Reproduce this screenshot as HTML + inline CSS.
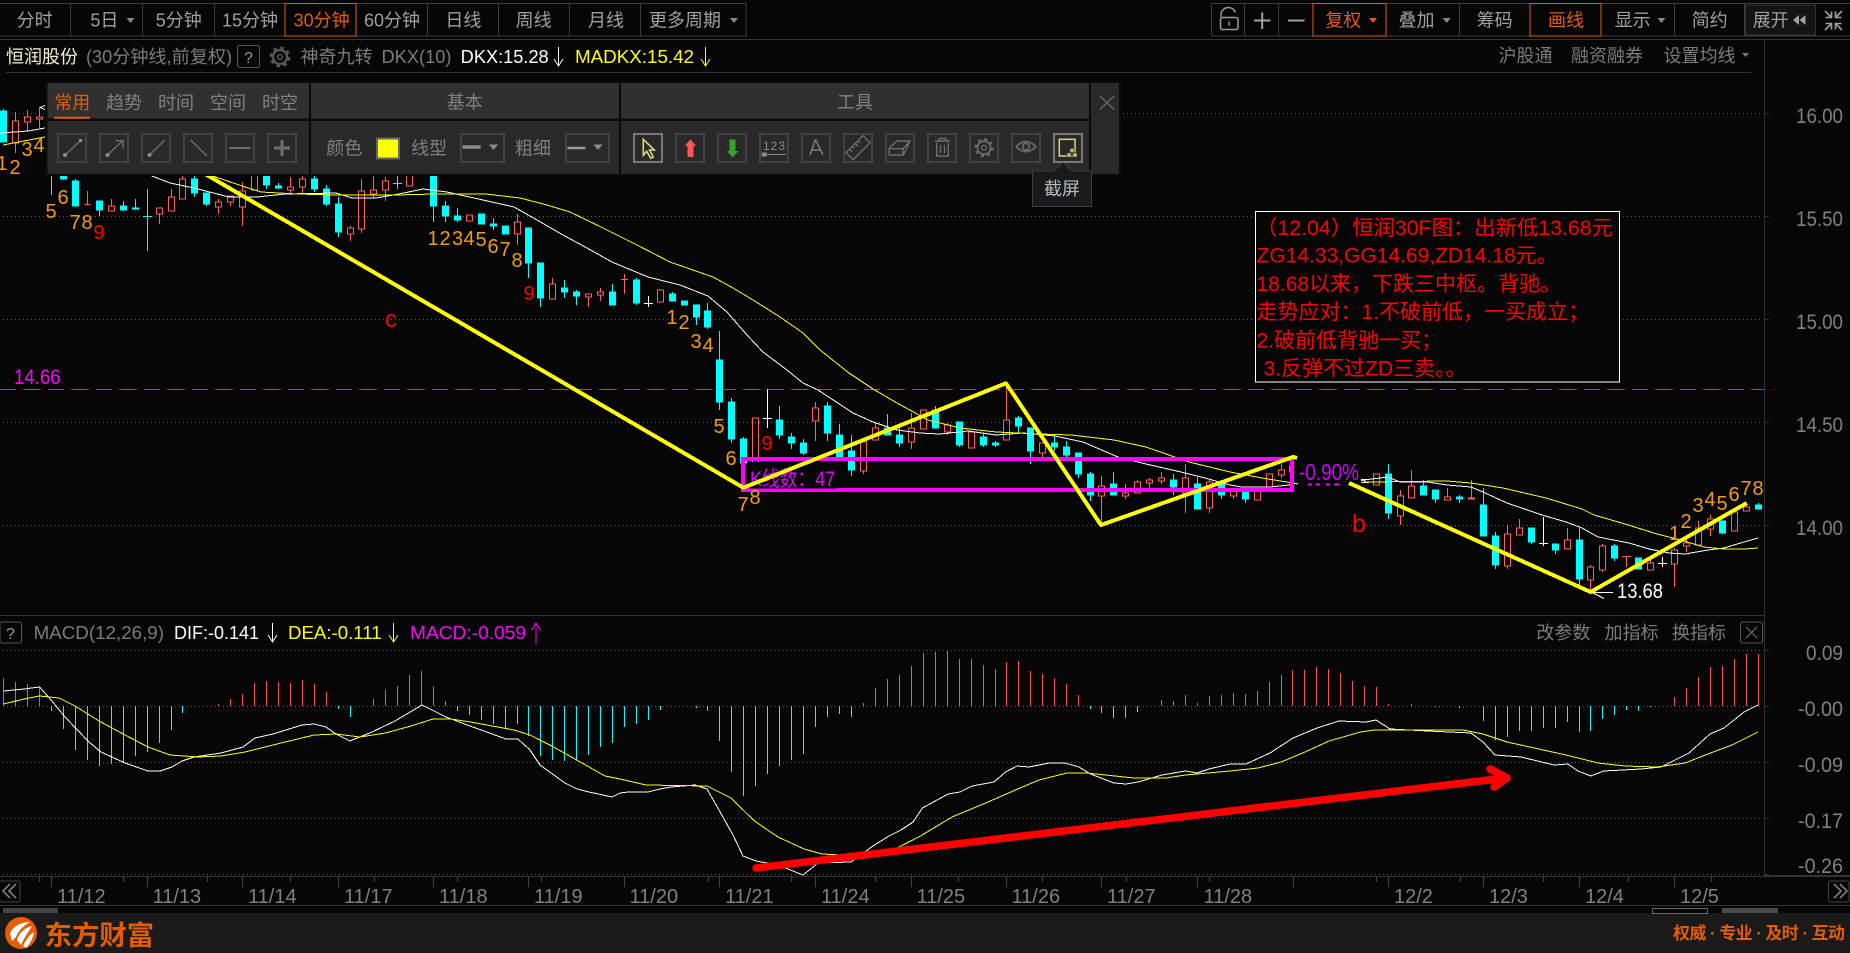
<!DOCTYPE html>
<html lang="zh-CN"><head><meta charset="utf-8"><title>恒润股份</title>
<style>
html,body{margin:0;padding:0;background:#060606;width:1850px;height:953px;overflow:hidden}
svg{display:block}
text{font-family:"Liberation Sans","Noto Sans CJK SC",sans-serif}
.t{font-size:18px;fill:#a0a0a0;text-anchor:middle}
.o{font-size:18px;fill:#e65c00;text-anchor:middle}
.s{font-size:18px;fill:#7c7c7c}
.p{font-size:18px;fill:#808080;text-anchor:middle}
.ax{font-size:21px;fill:#808080;text-anchor:end}
.d{font-size:20px;fill:#808080}
.n{font-size:20px;fill:#f39c12;text-anchor:middle}
.r{font-size:20px;fill:#f00;text-anchor:middle}
.note{font-size:21px;fill:#f00}
</style></head><body>
<svg width="1850" height="953" viewBox="0 0 1850 953" xmlns="http://www.w3.org/2000/svg">
<rect width="1850" height="953" fill="#060606"/>

<!-- grid -->
<g stroke="#5c5c5c" stroke-width="1" stroke-dasharray="1 3" shape-rendering="crispEdges">
<path d="M3 113.5H1762M3 216.5H1762M3 319.5H1762M3 422.5H1762M3 525.5H1762M3 650.5H1762M3 706.5H1762M3 762.5H1762M3 818.5H1762M3 874.5H1762"/>
</g>
<path d="M0 389.5H1764" stroke="#e010e0" stroke-width="1" stroke-dasharray="16 8" shape-rendering="crispEdges"/>
<g stroke="#333" stroke-width="1" fill="none" shape-rendering="crispEdges">
<path d="M0 39.5H1850M6 72.5H1751M0 615.5H1764M1764.5 39V875M0 876.5H1850M0 905.5H1850"/>
<path d="M1764 113.5h5M1764 216.5h5M1764 319.5h5M1764 422.5h5M1764 525.5h5M1764 650.5h5M1764 706.5h5M1764 762.5h5M1764 818.5h5M1764 874.5h5"/>
<path stroke="#444" d="M51.5 877v10M147.5 877v10M242.5 877v10M338.5 877v10M433.5 877v10M528.5 877v10M624.5 877v10M719.5 877v10M815.5 877v10M911.5 877v10M1006.5 877v10M1101.5 877v10M1197.5 877v10M1293.5 877v10M1388.5 877v10M1483.5 877v10M1579.5 877v10M1674.5 877v10"/>
<path stroke="#444" d="M39.5 877v5M123.5 877v5M207.5 877v5M290.5 877v5M374.5 877v5M457.5 877v5M541.5 877v5M708.5 877v5M791.5 877v5M875.5 877v5M958.5 877v5M1042.5 877v5M1126.5 877v5M1209.5 877v5M1376.5 877v5M1460.5 877v5M1543.5 877v5M1628.5 877v5M1711.5 877v5"/>
</g>

<!-- candles: cyan -->
<path shape-rendering="crispEdges" stroke="#0ff" fill="#0ff" stroke-width="1" d="M3.5 109V142M.5 111h6V142h-6zM51.5 174V195M63.5 174V180M60.5 174h6V179h-6zM75.5 179V206M72.5 181h6V206h-6zM99.5 201V216M96.5 201h6V210h-6zM123.5 201V211M120.5 206h6V210h-6zM135.5 199V210M132.5 208h6V209h-6zM147.5 189V251M143 216.5h9M194.5 176V197M191.5 179h6V193h-6zM206.5 193V206M203.5 193h6V204h-6zM266.5 174V189M263.5 174h6V185h-6zM278.5 183V189M275.5 186h6V188h-6zM314.5 174V192M311.5 179h6V189h-6zM326.5 185V206M323.5 189h6V204h-6zM338.5 197V237M335.5 204h6V232h-6zM397.5 176V189M393 183.5h9M433.5 174V222M430.5 174h6V206h-6zM445.5 201V222M442.5 206h6V216h-6zM457.5 208V222M454.5 216h6V220h-6zM478.5 214h6V224h-6zM493.5 218V230M490.5 224h6V226h-6zM502.5 226h6V234h-6zM528.5 228V278M525.5 228h6V263h-6zM540.5 263V307M537.5 263h6V298h-6zM564.5 280V298M561.5 288h6V292h-6zM576.5 290V305M573.5 292h6V296h-6zM612.5 284V305M609.5 292h6V305h-6zM636.5 278V305M633.5 280h6V303h-6zM672.5 292V301M669.5 294h6V301h-6zM681.5 301h6V305h-6zM696.5 305V325M693.5 305h6V317h-6zM707.5 303V329M704.5 311h6V327h-6zM719.5 331V410M716.5 360h6V402h-6zM731.5 398V443M728.5 402h6V439h-6zM743.5 437V463M740.5 439h6V463h-6zM779.5 406V439M776.5 420h6V435h-6zM791.5 433V449M788.5 437h6V443h-6zM803.5 439V455M800.5 443h6V453h-6zM827.5 402V441M824.5 406h6V433h-6zM839.5 424V460M836.5 435h6V458h-6zM851.5 435V476M848.5 451h6V470h-6zM887.5 414V435M884.5 428h6V435h-6zM899.5 425V447M896.5 435h6V443h-6zM935.5 406V428M932.5 410h6V428h-6zM959.5 422V447M956.5 422h6V445h-6zM983.5 434V447M980.5 437h6V445h-6zM995.5 441V447M992.5 443h6V445h-6zM1018.5 416V433M1015.5 418h6V426h-6zM1030.5 428V464M1027.5 428h6V451h-6zM1054.5 435V451M1051.5 443h6V447h-6zM1066.5 441V457M1063.5 447h6V455h-6zM1078.5 453V478M1075.5 453h6V474h-6zM1090.5 472V501M1087.5 474h6V495h-6zM1113.5 472V495M1110.5 484h6V495h-6zM1173.5 474V495M1170.5 480h6V487h-6zM1197.5 477V509M1194.5 484h6V509h-6zM1221.5 480V499M1218.5 484h6V495h-6zM1245.5 492V503M1242.5 492h6V499h-6zM1388.5 464V519M1385.5 474h6V513h-6zM1423.5 480V495M1420.5 486h6V495h-6zM1435.5 490V503M1432.5 490h6V499h-6zM1459.5 495V503M1456.5 497h6V499h-6zM1483.5 488V536M1480.5 505h6V536h-6zM1495.5 532V569M1492.5 536h6V565h-6zM1531.5 528V544M1528.5 528h6V542h-6zM1555.5 544V554M1552.5 544h6V550h-6zM1579.5 528V585M1576.5 540h6V579h-6zM1614.5 544V561M1611.5 546h6V558h-6zM1635.5 558h6V569h-6zM1722.5 521V534M1719.5 521h6V533h-6zM1758.5 503V509M1755.5 505h6V509h-6z"/>
<!-- candles: red hollow -->
<path shape-rendering="crispEdges" stroke="#ff5f5f" fill="none" stroke-width="1" d="M15.5 112V121M15.5 143V153M12.5 121h6V143h-6zM27.5 110V117M27.5 122V131M24.5 117h6V122h-6zM39.5 107V117M39.5 119V128M36.5 117h6V119h-6zM87.5 191V205M84.5 204.5h6M111.5 199V206M108.5 206h6V211h-6zM159.5 214V224M156.5 208h6V214h-6zM171.5 189V197M168.5 197h6V211h-6zM182.5 176V179M179.5 179h6V199h-6zM218.5 199V202M218.5 207V214M215.5 202h6V207h-6zM230.5 202V206M227.5 196h6V202h-6zM242.5 182V191M242.5 207V226M239.5 191h6V207h-6zM251.5 174V190H257.5V174M290.5 177V187M290.5 190V193M287.5 187h6V190h-6zM302.5 174V179M302.5 187V193M299.5 179h6V187h-6zM350.5 226V228M350.5 234V241M347.5 228h6V234h-6zM361.5 179V191M361.5 229V233M358.5 191h6V229h-6zM373.5 174V190M373.5 194V198M370.5 190h6V194h-6zM385.5 177V181M385.5 190V201M382.5 181h6V190h-6zM406.5 174V186H412.5V174M466.5 215h6V221h-6zM517.5 214V222M517.5 234V245M514.5 222h6V234h-6zM552.5 278V284M549.5 284h6V299h-6zM588.5 297V307M585.5 294h6V297h-6zM600.5 288V292M600.5 295V301M597.5 292h6V295h-6zM624.5 274V294M621 279.5h7M657.5 290h6V302h-6zM752.5 418h6V465h-6zM815.5 402V408M815.5 421V441M812.5 408h6V421h-6zM863.5 471V474M860.5 442h6V471h-6zM875.5 423V428M872.5 428h6V440h-6zM911.5 413V428M911.5 442V449M908.5 428h6V442h-6zM920.5 410h6V429h-6zM947.5 423V425M947.5 432V435M944.5 425h6V432h-6zM968.5 432h6V448h-6zM1006.5 386V420M1003.5 420h6V440h-6zM1042.5 453V457M1039.5 443h6V453h-6zM1101.5 476V486M1101.5 496V525M1098.5 486h6V496h-6zM1125.5 484V493M1125.5 496V499M1122.5 493h6V496h-6zM1137.5 480V482M1134.5 482h6V493h-6zM1149.5 478V480M1149.5 483V488M1146.5 480h6V483h-6zM1161.5 472V478M1161.5 481V484M1158.5 478h6V481h-6zM1185.5 464V478M1185.5 493V513M1182.5 478h6V493h-6zM1209.5 480V482M1209.5 508V513M1206.5 482h6V508h-6zM1233.5 496V499M1230.5 490h6V496h-6zM1254.5 490h6V500h-6zM1266.5 474h6V487h-6zM1281.5 464V470M1281.5 475V478M1278.5 470h6V475h-6zM1289.5 466h6V472h-6zM1373.5 474h6V485h-6zM1400.5 490V496M1400.5 516V525M1397.5 496h6V516h-6zM1411.5 470V486M1408.5 486h6V498h-6zM1447.5 488V497M1444.5 497h6V500h-6zM1471.5 480V498M1468.5 498h6V499h-6zM1507.5 525V534M1507.5 566V569M1504.5 534h6V566h-6zM1519.5 519V528M1516.5 528h6V535h-6zM1567.5 528V540M1564.5 540h6V549h-6zM1590.5 565V567M1590.5 580V590M1587.5 567h6V580h-6zM1602.5 544V546M1602.5 570V572M1599.5 546h6V570h-6zM1626.5 557V567M1622 556.5h9M1650.5 559V563M1647.5 563h6V570h-6zM1674.5 548V550M1674.5 564V587M1671.5 550h6V564h-6zM1686.5 538V543M1686.5 546V552M1683.5 543h6V546h-6zM1698.5 521V528M1695.5 528h6V545h-6zM1710.5 515V519M1710.5 529V536M1707.5 519h6V529h-6zM1731.5 512h6V531h-6zM1746.5 503V507M1743.5 507h6V511h-6z"/>
<!-- white doji -->
<path shape-rendering="crispEdges" stroke="#fff" fill="none" d="M648.5 296V307M644 303.5h9M767.5 389V428M763 418.5h9M1360 479.5h9M1360 482.5h9M1364.5 479V483M1543.5 517V546M1539 543.5h9M1662.5 557V567M1658 563.5h9M40 107.5l5-2M40 107.5l5 2"/>

<!-- moving averages -->
<polyline shape-rendering="crispEdges" fill="none" stroke="#fff" points="0,133 28,131 45,128 152,176 170,183 194,188 229,197 257,197 285,194 336,193 352,198 376,198 399,194 423,189 447,192 474,198 514,207 537,220 563,235 587,248 612,262 648,277 680,285 708,296 727,312 747,335 763,352 787,370 803,383 818,390 853,413 873,422 897,430 920,433 940,434 968,431 996,435 1023,433 1055,436 1083,442 1118,457 1146,464 1181,472 1205,478 1230,485 1242,487 1270,487 1289,485 1298,482"/>
<polyline shape-rendering="crispEdges" fill="none" stroke="#fff" points="1360,481 1364,480 1388,477 1400,482 1428,482 1447,485 1471,487 1483,492 1507,503 1542,515 1566,522 1582,528 1598,537 1629,543 1649,549 1669,553 1685,554 1708,550 1724,548 1744,542 1758,538"/>
<polyline shape-rendering="crispEdges" fill="none" stroke="#ff0" points="3,145 45,137 213,176 245,187 261,192 297,194 336,195 395,195 435,194 486,194 520,198 547,205 570,212 603,228 637,245 670,262 713,277 733,288 753,300 780,317 803,333 820,350 849,373 873,389 897,403 928,420 960,428 996,432 1039,434 1071,435 1114,440 1146,447 1189,462 1230,472 1262,478 1293,483 1298,484"/>
<polyline shape-rendering="crispEdges" fill="none" stroke="#ff0" points="1350,483 1368,482 1447,481 1471,483 1503,488 1546,498 1582,509 1594,515 1625,524 1657,534 1677,539 1704,547 1724,549 1744,549 1758,548"/>

<!-- magenta box -->
<rect x="743" y="459" width="549" height="31" fill="none" stroke="#f0f" stroke-width="4" shape-rendering="crispEdges"/>
<rect x="749" y="462" width="88" height="26.5" fill="#060606"/>
<text x="750" y="486" font-size="21" fill="#e000ff" textLength="85" lengthAdjust="spacingAndGlyphs">K线数：47</text>
<rect x="1295" y="461" width="66" height="22" fill="#060606"/>
<text x="1299" y="480" font-size="23" fill="#d000ff" textLength="60" lengthAdjust="spacingAndGlyphs">-0.90%</text>
<path d="M1308 484.5h4M1316 484.5h4M1326 484.5h4M1334 484.5h5" stroke="#f0f" stroke-width="2"/>

<!-- TD numbers -->
<g>
<text class="n" x="2" y="170">1</text><text class="n" x="15" y="174">2</text><text class="n" x="27" y="156">3</text><text class="n" x="39" y="152">4</text>
<text class="n" x="51" y="218">5</text><text class="n" x="63" y="204">6</text><text class="n" x="75" y="229">7</text><text class="n" x="87" y="229">8</text><text class="r" x="99" y="239">9</text>
<text class="n" x="433" y="245">1</text><text class="n" x="445" y="245">2</text><text class="n" x="457.5" y="245">3</text><text class="n" x="469" y="245">4</text><text class="n" x="481" y="246">5</text><text class="n" x="493" y="253">6</text><text class="n" x="505" y="256">7</text><text class="n" x="517" y="267">8</text><text class="r" x="529" y="300">9</text>
<text class="n" x="672" y="324">1</text><text class="n" x="684" y="329">2</text><text class="n" x="696" y="348">3</text><text class="n" x="708" y="352">4</text><text class="n" x="719" y="433">5</text><text class="n" x="731" y="465">6</text><text class="r" x="767" y="450">9</text>
<text class="n" x="743" y="511">7</text><text class="n" x="755" y="504">8</text>
<text class="n" x="1674.5" y="540">1</text><text class="n" x="1686" y="528">2</text><text class="n" x="1698" y="512">3</text><text class="n" x="1710" y="506">4</text><text class="n" x="1722" y="510">5</text><text class="n" x="1734" y="501">6</text><text class="n" x="1746" y="495">7</text><text class="n" x="1758" y="495">8</text>
</g>
<text x="385" y="327" font-size="24" fill="#f00">c</text>
<text x="1352" y="532" font-size="25" fill="#f00">b</text>
<text x="14" y="384" font-size="21" fill="#f0f" textLength="46.5" lengthAdjust="spacingAndGlyphs">14.66</text>
<text x="1617" y="598" font-size="21" fill="#fff" textLength="46" lengthAdjust="spacingAndGlyphs">13.68</text>
<path d="M1592 592.5H1613M1592 592.5l12 6" stroke="#fff" fill="none"/>

<!-- drawn lines -->
<g fill="none" stroke="#ff0" stroke-width="4" shape-rendering="crispEdges" stroke-linejoin="round">
<polyline points="200,171 743.4,487.7 1006,383.3 1101,525 1293,457 1297,458"/>
<polyline points="1349,483 1590.6,592 1746.8,503"/>
</g>

<!-- note box -->
<rect x="1255.5" y="211.5" width="364" height="170.5" fill="#060606" stroke="#fff" stroke-width="1" shape-rendering="crispEdges"/>
<text class="note" x="1256" y="235" textLength="357" lengthAdjust="spacingAndGlyphs">（12.04）恒润30F图：出新低13.68元</text>
<text class="note" x="1256.5" y="262.5">ZG14.33,GG14.69,ZD14.18元。</text>
<text class="note" x="1256.5" y="291">18.68以来，下跌三中枢。背驰。</text>
<text class="note" x="1256.5" y="319">走势应对：1.不破前低，一买成立；</text>
<text class="note" x="1256.5" y="347.5">2.破前低背驰一买；</text>
<text class="note" x="1263.5" y="375.5">3.反弹不过ZD三卖。。</text>

<!-- MACD bars -->
<path shape-rendering="crispEdges" stroke="#ff5050" d="M3.5 706V678M15.5 706V682M27.5 706V684M39.5 706V687M218.5 706V704M230.5 706V699M242.5 706V694M254.5 706V683M266.5 706V681M278.5 706V682M290.5 706V683M302.5 706V680M314.5 706V684M326.5 706V692M373.5 706V699M385.5 706V690M397.5 706V686M409.5 706V675M421.5 706V671M433.5 706V686M445.5 706V701M863.5 706V703M875.5 706V688M887.5 706V679M899.5 706V675M911.5 706V666M923.5 706V653M935.5 706V652M947.5 706V651M959.5 706V659M971.5 706V659M983.5 706V665M995.5 706V669M1006.5 706V662M1018.5 706V661M1030.5 706V671M1042.5 706V674M1054.5 706V678M1066.5 706V684M1078.5 706V695M1161.5 706V700M1173.5 706V701M1185.5 706V695M1197.5 706V703M1209.5 706V696M1221.5 706V695M1233.5 706V693M1245.5 706V694M1257.5 706V691M1269.5 706V682M1281.5 706V675M1292.5 706V670M1304.5 706V670M1316.5 706V667M1328.5 706V669M1340.5 706V673M1352.5 706V681M1364.5 706V686M1376.5 706V687M1388.5 706V704M1411.5 706V704M1674.5 706V697M1686.5 706V688M1698.5 706V677M1710.5 706V667M1722.5 706V666M1734.5 706V659M1746.5 706V654M1758.5 706V654"/>
<path shape-rendering="crispEdges" stroke="#0ff" d="M51.5 706V711M63.5 706V729M75.5 706V750M87.5 706V760M99.5 706V766M111.5 706V764M123.5 706V763M135.5 706V756M147.5 706V752M159.5 706V743M171.5 706V730M182.5 706V713M338.5 706V709M350.5 706V717M457.5 706V711M469.5 706V715M481.5 706V720M493.5 706V724M505.5 706V728M517.5 706V724M528.5 706V736M540.5 706V756M552.5 706V760M564.5 706V761M576.5 706V760M588.5 706V755M600.5 706V747M612.5 706V743M624.5 706V727M636.5 706V724M648.5 706V720M660.5 706V710M696.5 706V708M707.5 706V711M719.5 706V741M731.5 706V772M743.5 706V796M755.5 706V786M767.5 706V774M779.5 706V766M791.5 706V760M803.5 706V754M815.5 706V727M827.5 706V717M839.5 706V714M851.5 706V717M1090.5 706V709M1101.5 706V713M1113.5 706V718M1125.5 706V718M1137.5 706V712M1435.5 706V707M1459.5 706V708M1483.5 706V721M1495.5 706V740M1507.5 706V737M1519.5 706V731M1531.5 706V731M1543.5 706V728M1555.5 706V728M1567.5 706V722M1579.5 706V732M1590.5 706V731M1602.5 706V719M1614.5 706V715M1626.5 706V710M1638.5 706V711M1650.5 706V707"/>
<!-- MACD lines -->
<polyline shape-rendering="crispEdges" fill="none" stroke="#fff" points="3.5,691 24,689 39.5,687 51,700 65,717 89,742 101,752 125,763 148,771 160,771 172,767 182,761 194,757 221,753 243,747 255,738 273,734 302,725 314,724 326,727 336,734 350,741 372,732 395,721 422,705 446,717 470,726 506,739 518,739 530,750 540,765 565,783 577,789 589,792 612,797 620,793 628,792 648,792 660,789 671,787 695,785 707,789 719,810 733,835 743,856 756,861 778,865 803,875 818,863 851,862 873,846 889,836 901,830 913,822 922.5,808 948,794 960,792 972,786 994,782 1005.5,772 1017,766 1029,767 1049,763 1065,763 1079,767 1090.5,774 1114,783 1126,784 1138,782 1162,775 1185.5,771 1197,773 1209,769 1230,764 1246,764 1270,753 1293,738 1317,728 1339,721 1366,722 1376,720 1390,729 1428,731 1471,733 1483,742 1495,755 1521,757 1554,765 1568,764 1578,771 1590.6,776 1604,771 1641,769 1661,767 1689,753 1710,734 1724,728 1744,712 1758,705"/>
<polyline shape-rendering="crispEdges" fill="none" stroke="#ff0" points="3.5,704 24,699 39.5,696 59,698 75,706 99,721 125,735 148,747 170,755 198,757 221,756 245,752 277,744 314,735 336,734 360,737 385.5,733 411,726 433,719 451,719 470.5,722 514,730 530,735 553.6,747 589,767 605,776 620,779 646,785 707,786 731,798 754.4,821 778,837 804,849 822,854 841.5,855 897,848 920.5,836 952,817 988,802 1015.4,790 1039,780 1067,773 1086.6,773 1134,778 1165.7,778 1185.5,775 1230,771 1258,768 1281,762 1305,752 1329,741 1360.5,732 1374,730 1463,730 1483,734 1507,742 1566,755 1598,763 1625,766 1657,767 1685,763 1708,754 1732,745 1758,732"/>
<!-- red arrow -->
<path d="M756 868L1505 778M1490 769L1507 778L1494 787" fill="none" stroke="#f00" stroke-width="7.5" stroke-linecap="round" stroke-linejoin="round"/>

<!-- axis labels -->
<rect x="1770" y="40" width="80" height="575" fill="#060606"/>
<text class="ax" x="1843" y="123" textLength="47" lengthAdjust="spacingAndGlyphs">16.00</text>
<text class="ax" x="1843" y="226" textLength="47" lengthAdjust="spacingAndGlyphs">15.50</text>
<text class="ax" x="1843" y="329" textLength="47" lengthAdjust="spacingAndGlyphs">15.00</text>
<text class="ax" x="1843" y="432" textLength="47" lengthAdjust="spacingAndGlyphs">14.50</text>
<text class="ax" x="1843" y="535" textLength="47" lengthAdjust="spacingAndGlyphs">14.00</text>
<text class="ax" x="1843" y="660" font-size="20" textLength="37" lengthAdjust="spacingAndGlyphs">0.09</text>
<text class="ax" x="1843" y="716" textLength="45" lengthAdjust="spacingAndGlyphs">-0.00</text>
<text class="ax" x="1843" y="772" textLength="45" lengthAdjust="spacingAndGlyphs">-0.09</text>
<text class="ax" x="1843" y="828" textLength="45" lengthAdjust="spacingAndGlyphs">-0.17</text>
<text class="ax" x="1843" y="873" textLength="45" lengthAdjust="spacingAndGlyphs">-0.26</text>
<path d="M1764 875.5H1850" stroke="#333" shape-rendering="crispEdges"/>

<!-- dates -->
<text class="d" x="57" y="903">11/12</text><text class="d" x="152.6" y="903">11/13</text><text class="d" x="248" y="903">11/14</text><text class="d" x="344" y="903">11/17</text><text class="d" x="439" y="903">11/18</text><text class="d" x="534" y="903">11/19</text><text class="d" x="629.5" y="903">11/20</text><text class="d" x="725" y="903">11/21</text><text class="d" x="821" y="903">11/24</text><text class="d" x="916.6" y="903">11/25</text><text class="d" x="1011.5" y="903">11/26</text><text class="d" x="1107" y="903">11/27</text><text class="d" x="1203.6" y="903">11/28</text><text class="d" x="1394" y="903">12/2</text><text class="d" x="1489" y="903">12/3</text><text class="d" x="1585" y="903">12/4</text><text class="d" x="1680" y="903">12/5</text>

<!-- nav -->
<rect x="-1" y="881" width="21" height="21" rx="2" fill="none" stroke="#444"/>
<path d="M10 884l-7 7 7 7M16 884l-7 7 7 7" fill="none" stroke="#888" stroke-width="1.5"/>
<rect x="1828.5" y="881" width="20.5" height="21" rx="2" fill="none" stroke="#444"/>
<path d="M1834 884l7 7-7 7M1840 884l7 7-7 7" fill="none" stroke="#888" stroke-width="1.5"/>

<!-- top toolbar left -->
<g fill="none" stroke="#3c3c3c" stroke-width="1" shape-rendering="crispEdges">
<path d="M0 3.5H746V36H0M70.5 3.5V36M142.5 3.5V36M214.5 3.5V36M427.5 3.5V36M498.5 3.5V36M569.5 3.5V36M640.5 3.5V36M746 3.5V36"/>
<path d="M1211.5 3.5H1850M1211.5 36H1850M1211.5 3.5V36M1244.5 3.5V36M1278.5 3.5V36M1459.5 3.5V36M1674.5 3.5V36M1744.5 3.5V36"/>
</g>
<rect x="1745.5" y="5" width="70" height="30" fill="#141414" stroke="#333"/>
<rect x="285" y="3.5" width="71" height="32.5" fill="#060606" stroke="#e65c00" shape-rendering="crispEdges"/>
<rect x="1313" y="3.5" width="73" height="32.5" fill="#060606" stroke="#e65c00" shape-rendering="crispEdges"/>
<rect x="1530" y="3.5" width="71" height="32.5" fill="#060606" stroke="#e65c00" shape-rendering="crispEdges"/>
<text class="t" x="34.6" y="26.5">分时</text><text class="t" x="104.4" y="26.5">5日</text>
<path d="M126.5 18h8l-4 5z" fill="#8a8a8a"/>
<text class="t" x="178.8" y="26.5">5分钟</text><text class="t" x="250" y="26.5">15分钟</text><text class="o" x="321.6" y="26.5">30分钟</text><text class="t" x="392" y="26.5">60分钟</text><text class="t" x="463.4" y="26.5">日线</text><text class="t" x="533.6" y="26.5">周线</text><text class="t" x="606" y="26.5">月线</text><text class="t" x="685" y="26.5">更多周期</text>
<path d="M730 18h8l-4 5z" fill="#8a8a8a"/>

<!-- top toolbar right -->
<path d="M1221 17V14a7.5 7.5 0 0 1 14.5-1.5" fill="none" stroke="#999" stroke-width="1.5"/>
<rect x="1220.5" y="17.5" width="17.5" height="12" rx="2" fill="none" stroke="#999" stroke-width="1.5"/>
<path d="M1229.2 21.5v4" stroke="#999" stroke-width="1.5"/>
<path d="M1254 20.5h16.5M1262.2 12.5v16.5M1288 20.5h16.5" stroke="#a0a0a0" stroke-width="2"/>
<text class="o" x="1343.3" y="26.5">复权</text><path d="M1369 18h8l-4 5z" fill="#e65c00"/>
<text class="t" x="1416.5" y="26.5">叠加</text><path d="M1442.7 18h8l-4 5z" fill="#8a8a8a"/>
<text class="t" x="1494.7" y="26.5">筹码</text>
<text class="o" x="1566" y="26.5">画线</text>
<text class="t" x="1632.6" y="26.5">显示</text><path d="M1657.4 18h8l-4 5z" fill="#8a8a8a"/>
<text class="t" x="1709.7" y="26.5">简约</text>
<text class="t" x="1770.7" y="26.5">展开</text>
<path d="M1799 15v10l-6-5zM1805.5 15v10l-6-5z" fill="#a0a0a0"/>
<path d="M1825 11l6 6M1831.5 11.5v6h-6M1842 11l-6 6M1835.5 11.5v6h6M1825 30l6-6M1831.5 29.5v-6h-6M1842 30l-6-6M1835.5 29.5v-6h6" fill="none" stroke="#a0a0a0" stroke-width="1.6"/>

<!-- row 2 -->
<text x="6" y="63" font-size="18" fill="#f4f4d0">恒润股份</text>
<text class="s" x="86" y="63" textLength="146" lengthAdjust="spacingAndGlyphs">(30分钟线,前复权)</text>
<rect x="237.5" y="45.5" width="22" height="22" rx="2" fill="none" stroke="#555"/>
<text x="248.5" y="63" font-size="16" fill="#999" text-anchor="middle">?</text>
<circle cx="280" cy="57" r="7" fill="none" stroke="#555" stroke-width="2.5"/>
<circle cx="280" cy="57" r="9" fill="none" stroke="#555" stroke-width="3" stroke-dasharray="3.5 3.57"/>
<circle cx="280" cy="57" r="2.5" fill="none" stroke="#555" stroke-width="1.5"/>
<text class="s" x="300.5" y="63">神奇九转</text>
<text class="s" x="381.5" y="63" textLength="70" lengthAdjust="spacingAndGlyphs">DKX(10)</text>
<text x="460.7" y="63" font-size="18" fill="#fff" textLength="88" lengthAdjust="spacingAndGlyphs">DKX:15.28</text>
<path d="M558.5 47V66M554 59l4.5 7 4.5-7" fill="none" stroke="#fff"/>
<text x="575" y="63" font-size="18" fill="#ff0" textLength="119" lengthAdjust="spacingAndGlyphs">MADKX:15.42</text>
<path d="M705.5 47V66M701 59l4.5 7 4.5-7" fill="none" stroke="#ff0"/>
<text class="s" x="1498.5" y="62" fill="#808080">沪股通</text>
<text class="s" x="1571" y="62">融资融券</text>
<text class="s" x="1663.5" y="62">设置均线</text>
<path d="M1742 53h7l-3.5 4z" fill="#777"/>

<!-- drawing panel -->
<rect x="45" y="81" width="1076" height="95" fill="#0a0a0a"/>
<g fill="#303030">
<rect x="47.5" y="83" width="261.5" height="35.5"/>
<rect x="311" y="83" width="308" height="35.5"/>
<rect x="621" y="83" width="468" height="35.5"/>
</g>
<g fill="#292929">
<rect x="47.5" y="121" width="261.5" height="53"/>
<rect x="311" y="121" width="308" height="53"/>
<rect x="621" y="121" width="468" height="53"/>
<rect x="1091" y="83" width="28" height="91"/>
</g>
<path d="M1100 96l14 13.5M1114 96l-14 13.5" stroke="#6a6a6a" stroke-width="1.3"/>
<text x="72.3" y="109" font-size="18" fill="#e65c00" text-anchor="middle">常用</text>
<path d="M54 117.8h36" stroke="#e65c00" stroke-width="2"/>
<text class="p" x="124" y="109">趋势</text><text class="p" x="176" y="109">时间</text><text class="p" x="228" y="109">空间</text><text class="p" x="280" y="109">时空</text>
<text class="p" x="464.6" y="108.5">基本</text><text class="p" x="855" y="108.5">工具</text>
<g fill="none" stroke="#424242" stroke-width="2">
<rect x="58" y="134" width="28" height="28"/><rect x="100" y="134" width="28" height="28"/><rect x="142" y="134" width="28" height="28"/><rect x="184" y="134" width="28" height="28"/><rect x="226" y="134" width="28" height="28"/><rect x="268" y="134" width="28" height="28"/>
<rect x="461" y="134" width="43" height="28"/><rect x="566" y="134" width="43" height="28"/>
<rect x="676" y="134" width="28" height="28"/><rect x="718" y="134" width="28" height="28"/><rect x="760" y="134" width="28" height="28"/><rect x="802" y="134" width="28" height="28"/><rect x="844" y="134" width="28" height="28"/><rect x="886" y="134" width="28" height="28"/><rect x="928" y="134" width="28" height="28"/><rect x="970" y="134" width="28" height="28"/><rect x="1012" y="134" width="28" height="28"/>
</g>
<rect x="634" y="134" width="28" height="28" fill="none" stroke="#7a7a7a" stroke-width="2"/>
<rect x="1054" y="134" width="28" height="28" fill="none" stroke="#7a7a7a" stroke-width="2"/>
<!-- left tool icons -->
<g fill="none" stroke="#6e6e6e" stroke-width="1.4">
<path d="M65.2 155L80.3 140.7"/><path d="M107.6 155L122.6 140.7M115.5 140.7h7.5v7.5"/><path d="M149.5 155L165 140"/><path d="M190.6 140L206.8 155.7"/>
<path d="M229.3 148h21" stroke-width="2"/><path d="M274 148h16M282 140v16" stroke-width="3"/>
</g>
<g fill="#8c8c8c"><circle cx="65" cy="155" r="2"/><circle cx="80.5" cy="140.5" r="1.8"/><circle cx="107.5" cy="155" r="2"/><circle cx="149.5" cy="155" r="2"/></g>
<!-- basic row -->
<text class="p" x="344.3" y="154.5">颜色</text>
<rect x="377" y="138.5" width="22" height="20" fill="#ff0" stroke="#666" stroke-width="2"/>
<text class="p" x="429" y="154.5">线型</text>
<path d="M462.6 147h18" stroke="#8c8c8c" stroke-width="3.5"/><path d="M489 144.5h9l-4.5 5.5z" fill="#8c8c8c"/>
<text class="p" x="533" y="154.5">粗细</text>
<path d="M567.4 148h18" stroke="#9a9a9a" stroke-width="2.5"/><path d="M593.5 144.5h9l-4.5 5.5z" fill="#8c8c8c"/>
<!-- tool icons -->
<path d="M643.3 139.3L654.3 150H649.5L653.3 157L650.7 158.3L646.7 151.3L643.3 155.3Z" fill="none" stroke="#d8d880" stroke-width="1.6"/>
<path d="M690.3 139.3L696 146H693.5V157H687.5V146H685Z" fill="#f55"/>
<path d="M729.5 139.5H735.5V151H738.5L732.5 157.5L727 151H729.5Z" fill="#3ca030"/>
<text x="774" y="150" font-size="12" fill="#8a8a8a" text-anchor="middle" textLength="22">123</text>
<rect x="761.7" y="152.5" width="5" height="4" fill="#8a8a8a"/><path d="M766 154.5h19.7" stroke="#8a8a8a"/>
<path d="M815.5 139.5L810 155M815.5 139.5L823 155M812 150h8.500" fill="none" stroke="#7e7e7e" stroke-width="1.5"/>
<g transform="rotate(-45 858 147.700)" fill="none" stroke="#6e6e6e" stroke-width="1.4"><rect x="846" y="142.700" width="24" height="10"/><path d="M851 142.700v4M855 142.700v3M859 142.700v4M863 142.700v3"/></g>
<path d="M889.300 147.700L897.300 141H910L903.300 155H889.300ZM889.300 148.700H903L910 141M903 148.700V155" fill="none" stroke="#6e6e6e" stroke-width="1.4"/>
<path d="M935 141h15M939.300 141v-2.500h6.400V141M936.700 142.700V156H948.300V142.700M940.500 145V153M944.500 145V153" fill="none" stroke="#6e6e6e" stroke-width="1.4"/>
<circle cx="984" cy="147.700" r="6.500" fill="none" stroke="#6a6a6a" stroke-width="1.800"/>
<circle cx="984" cy="147.700" r="8.300" fill="none" stroke="#6a6a6a" stroke-width="2.500" stroke-dasharray="3 3.500"/>
<circle cx="984" cy="147.700" r="2.400" fill="none" stroke="#6a6a6a" stroke-width="1.300"/>
<path d="M1016 146.700Q1026 136.500 1036 146.700Q1026 156.500 1016 146.700Z" fill="none" stroke="#6e6e6e" stroke-width="1.600"/>
<circle cx="1026" cy="146.700" r="3.300" fill="none" stroke="#6e6e6e" stroke-width="1.600"/>
<rect x="1059.300" y="139.300" width="15.700" height="16.700" fill="none" stroke="#d8d880" stroke-width="1.500"/>
<g fill="#b4b46a" stroke="#292929" stroke-width=".6"><circle cx="1069" cy="155" r="2.400"/><circle cx="1075" cy="155" r="2.400"/><circle cx="1072" cy="150.500" r="2.400"/></g>
<!-- tooltip -->
<rect x="1032.500" y="171" width="59" height="35.500" fill="#1a1a1a" stroke="#3c3c3c"/>
<path d="M1053.300 171.500L1062.700 162.500L1072.700 171.500" fill="#1a1a1a" stroke="#3c3c3c"/>
<path d="M1054.500 171.500H1071.500" stroke="#1a1a1a" stroke-width="1.500"/>
<text x="1062" y="195" font-size="18" fill="#b4bcc4" text-anchor="middle">截屏</text>

<!-- macd header -->
<rect x="0" y="622" width="21.500" height="21" rx="2" fill="none" stroke="#555"/>
<text x="10.500" y="639" font-size="16" fill="#999" text-anchor="middle">?</text>
<text class="s" x="33.600" y="639" fill="#6e6e6e" textLength="130.400" lengthAdjust="spacingAndGlyphs">MACD(12,26,9)</text>
<text x="174" y="639" font-size="18" fill="#fff" textLength="85" lengthAdjust="spacingAndGlyphs">DIF:-0.141</text>
<path d="M272.500 623V642M268 635l4.500 7 4.500-7" fill="none" stroke="#fff"/>
<text x="288" y="639" font-size="18" fill="#ff0" textLength="93.600" lengthAdjust="spacingAndGlyphs">DEA:-0.111</text>
<path d="M393.500 623V642M389 635l4.500 7 4.500-7" fill="none" stroke="#ff0"/>
<text x="410" y="639" font-size="18" fill="#f0f" textLength="116" lengthAdjust="spacingAndGlyphs">MACD:-0.059</text>
<path d="M536 623V644M531.500 630l4.500-7 4.500 7" fill="none" stroke="#f0f"/>
<text class="s" x="1536.400" y="639">改参数</text><text class="s" x="1604.500" y="639">加指标</text><text class="s" x="1672" y="639">换指标</text>
<rect x="1740.500" y="622" width="22" height="21" rx="2" fill="none" stroke="#555"/>
<path d="M1746 627l11 11M1757 627l-11 11" stroke="#777"/>

<!-- footer -->
<rect x="0" y="913" width="1850" height="40" fill="#1a1a1a"/>
<rect x="3" y="908" width="55" height="5" fill="#444"/>
<rect x="1652.500" y="908.500" width="55" height="5" fill="none" stroke="#666"/>
<rect x="1722" y="908" width="56" height="5" fill="#4a4a4a"/>
<circle cx="21" cy="933" r="16" fill="#e85d04"/>
<path d="M10 934C12 927 20 922 30 922C25 925 19 929 16 937L12 941Z" fill="#fff"/>
<path d="M17 940C19 933 24 928 32 926C29 931 25 936 21 945Z" fill="#fff"/>
<path d="M23 946C26 940 29 935 34 932C33 938 30 944 26 948Z" fill="#fff"/>
<text x="44.700" y="945" font-size="27" font-weight="700" fill="#e65c00" textLength="109.500" lengthAdjust="spacingAndGlyphs">东方财富</text>
<text x="1673" y="939" font-size="17" font-weight="700" fill="#e65c00" textLength="172" lengthAdjust="spacing">权威 · 专业 · 及时 · 互动</text>
</svg>
</body></html>
